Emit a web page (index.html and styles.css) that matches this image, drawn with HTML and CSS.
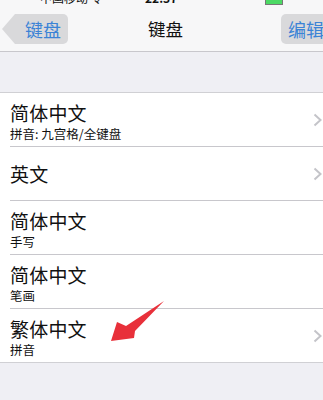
FILE: index.html
```html
<!DOCTYPE html>
<html lang="zh-CN">
<head>
<meta charset="utf-8">
<link rel="stylesheet" href="styles.css">
</head>
<body>
<div class="status">
  <span class="carrier">中国移动 令</span>
  <span class="time">22:37</span>
  <span class="right">● ➚ 42% <span class="batt"></span></span>
</div>
<div class="nav">
  <div class="back"><span>键盘</span></div>
  <div class="title">键盘</div>
  <div class="edit">编辑</div>
</div>
<div class="gap"></div>
<div class="group">
  <div class="row two"><div class="content"><div class="t">简体中文</div><div class="s">拼音: 九宫格/全键盘</div></div><svg class="chev" viewBox="0 0 9 14"><path d="M1.5 1.5 L7.5 7 L1.5 12.5" /></svg></div>
  <div class="row one"><div class="content"><div class="t">英文</div></div><svg class="chev" viewBox="0 0 9 14"><path d="M1.5 1.5 L7.5 7 L1.5 12.5" /></svg></div>
  <div class="row two"><div class="content"><div class="t">简体中文</div><div class="s">手写</div></div></div>
  <div class="row two"><div class="content"><div class="t">简体中文</div><div class="s">笔画</div></div></div>
  <div class="row two last"><div class="content"><div class="t">繁体中文</div><div class="s">拼音</div></div><svg class="chev" viewBox="0 0 9 14"><path d="M1.5 1.5 L7.5 7 L1.5 12.5" /></svg></div>
</div>
<svg class="arrow" width="323" height="400" viewBox="0 0 323 400">
  <polygon points="164,301 135,331 134,338 111,341 117,322 126,326" />
</svg>
</body>
</html>
```
FILE: styles.css
```css
* { box-sizing: border-box; }
html, body { margin: 0; padding: 0; }
body {
  width: 323px;
  height: 400px;
  overflow: hidden;
  background: #efeff4;
  font-family: "Noto Sans CJK SC", "Noto Sans", sans-serif;
  color: #111;
  position: relative;
}
.status {
  height: 5px;
  overflow: hidden;
  background: #f7f7f8;
  display: flex;
  align-items: flex-end;
  font-size: 12px;
  line-height: 14px;
}
.status span { display: block; }
.carrier { margin-left: 40px; width: 105px; }
.time { font-weight: bold; width: 85px; }
.right { display: flex; align-items: flex-end; gap: 4px; margin-left: auto; margin-right: 6px; }
.batt { width: 18px; height: 8px; background: #4cd964; border: 1px solid #777; }
.nav {
  height: 47px;
  background: #f7f7f8;
  border-bottom: 1px solid #c8c7cc;
  display: grid;
  grid-template-columns: 148px auto 1fr;
  align-items: center;
  overflow: hidden;
}
.back {
  margin-left: 2px;
  width: 66px;
  height: 30px;
  background: #d9d9db;
  border-radius: 0 5px 5px 0;
  clip-path: polygon(0 50%, 13px 0, 100% 0, 100% 100%, 13px 100%);
  color: #3b83d6;
  font-size: 18px;
  line-height: 30px;
  padding-left: 23px;
  margin-top: 2px;
}
.title {
  font-size: 17.5px;
  line-height: 30px;
  margin-top: 2px;
}
.edit {
  justify-self: end;
  margin-right: -12px;
  width: 54px;
  height: 30px;
  background: #d9d9db;
  border-radius: 5px;
  color: #3b83d6;
  font-size: 18px;
  line-height: 30px;
  padding-left: 7px;
  margin-top: 2px;
}
.gap { height: 40px; }
.group {
  background: #fff;
  border-top: 1px solid #d0d0d4;
  border-bottom: 1px solid #d0d0d4;
}
.row {
  height: 54px;
  margin-left: 10px;
  border-bottom: 1px solid #c8c7cc;
  display: flex;
  align-items: center;
}
.row.last { height: 53px; border-bottom: none; }
.content {
  flex: 1;
  height: 100%;
  display: flex;
  flex-direction: column;
}
.row.one .content { justify-content: center; }
.row.two .content { padding-top: 7.5px; }
.t { font-size: 19px; line-height: 24px; letter-spacing: 0.2px; }
.s { font-size: 12.5px; line-height: 18px; }
.chev {
  width: 9px;
  height: 14px;
  margin-right: 1px;
  fill: none;
  stroke: #c4c4c9;
  stroke-width: 2;
}
.arrow {
  position: absolute;
  left: 0;
  top: 0;
  pointer-events: none;
}
.arrow polygon { fill: #e8303a; }
```
